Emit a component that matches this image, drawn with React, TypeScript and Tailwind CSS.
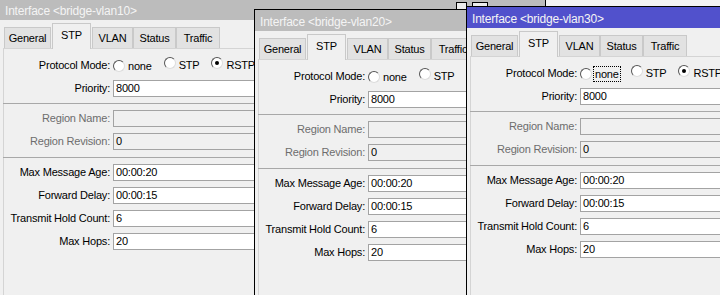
import React from "react";

const tabs = ["General", "STP", "VLAN", "Status", "Traffic"];
const tabWidth: Record<string, string> = {
  General: "w-[47px]",
  STP: "w-[39px]",
  VLAN: "w-[41px]",
  Status: "w-[43px]",
  Traffic: "w-[44px]",
};

function Radio({ checked }: { checked?: boolean }) {
  return (
    <span className="relative inline-block h-[12px] w-[12px] shrink-0 rounded-full border border-b-[#dcdcdc] border-l-[#555] border-r-[#dcdcdc] border-t-[#555] bg-white">
      {checked && <span className="absolute left-[3px] top-[3px] h-[4px] w-[4px] rounded-full bg-black" />}
    </span>
  );
}

function Row({ label, value, disabled }: { label: string; value?: string; disabled?: boolean }) {
  return (
    <div className="flex h-[17px] items-center">
      <span className={`w-[106px] shrink-0 text-right leading-[17px] ${disabled ? "text-[#6d6d6d]" : "text-black"}`}>
        {label}:
      </span>
      <div
        className={`ml-[3px] h-[17px] flex-1 border border-[#a3a3a3] px-[2px] leading-[15px] text-black ${
          disabled ? "bg-[#f0f0f0]" : "bg-white"
        }`}
      >
        {value}
      </div>
    </div>
  );
}

function Separator({ extra }: { extra?: boolean }) {
  return <div className={`-ml-px h-px bg-[#a8a8a8] ${extra ? "mt-[1px]" : ""}`} />;
}

function Window({
  title,
  active,
  pos,
  focusNone,
  buttons,
}: {
  title: string;
  active?: boolean;
  pos: string;
  focusNone?: boolean;
  buttons?: boolean;
}) {
  return (
    <div className={`absolute flex h-[340px] w-[547px] flex-col border border-black bg-[#f0f0f0] ${pos}`}>
      {/* title bar */}
      <div
        className={`relative flex h-[21px] shrink-0 items-center px-[5px] pt-[3px] text-[12px] text-[#f4f4f4] ${
          active ? "bg-[#5151cc]" : "bg-[#bcbcbc]"
        }`}
      >
        {title}
        {buttons && (
          <>
            <span className="absolute left-[456px] top-[3px] h-[14px] w-[11px] border border-black bg-[#ececec]" />
            <span className="absolute left-[472px] top-[3px] h-[14px] w-[16px] border border-black bg-[#ececec]" />
          </>
        )}
      </div>

      {/* tabs */}
      <div className="flex h-[28px] shrink-0 items-end pl-[4px]">
        {tabs.map((t) =>
          t === "STP" ? (
            <div
              key={t}
              className="relative z-10 mx-[1px] -mb-px flex h-[26px] w-[39px] items-center justify-center border border-b-0 border-[#c9c9c9] bg-[#f0f0f0] pb-[2px]"
            >
              {t}
            </div>
          ) : (
            <div
              key={t}
              className={`flex h-[21px] items-center justify-center border border-b-0 border-[#c9c9c9] bg-[#e2e2e2] ${tabWidth[t]}`}
            >
              {t}
            </div>
          )
        )}
      </div>

      {/* panel */}
      <div className="ml-[3px] flex flex-1 flex-col gap-[6px] border-l border-t border-[#d4d4d4] pt-[8px]">
        <div className="flex h-[17px] items-center">
          <span className="w-[106px] shrink-0 text-right leading-[17px]">Protocol Mode:</span>
          <div className="ml-[3px] flex items-center">
            <Radio />
            <span
              className={`ml-[2px] px-[1px] leading-[14px] ${
                focusNone ? "outline-1 outline-dotted outline-black" : ""
              }`}
            >
              none
            </span>
            <span className="ml-[11px]">
              <Radio />
            </span>
            <span className="ml-[3px]">STP</span>
            <span className="ml-[12px]">
              <Radio checked />
            </span>
            <span className="ml-[3px]">RSTP</span>
          </div>
        </div>
        <Row label="Priority" value="8000" />
        <Separator />
        <Row label="Region Name" disabled />
        <Row label="Region Revision" value="0" disabled />
        <Separator extra />
        <Row label="Max Message Age" value="00:00:20" />
        <Row label="Forward Delay" value="00:00:15" />
        <Row label="Transmit Hold Count" value="6" />
        <Row label="Max Hops" value="20" />
      </div>
    </div>
  );
}

export default function App() {
  return (
    <div className="relative h-[295px] w-[720px] overflow-hidden bg-[#f4f4f4] font-['Liberation_Sans',Arial,sans-serif] text-[11px] tracking-[-0.2px] text-black">
      <Window title="Interface <bridge-vlan10>" pos="left-[-1px] top-[-2px]" buttons />
      <Window title="Interface <bridge-vlan20>" pos="left-[254px] top-[9px]" />
      <Window title="Interface <bridge-vlan30>" pos="left-[466px] top-[6px]" active focusNone />
    </div>
  );
}
